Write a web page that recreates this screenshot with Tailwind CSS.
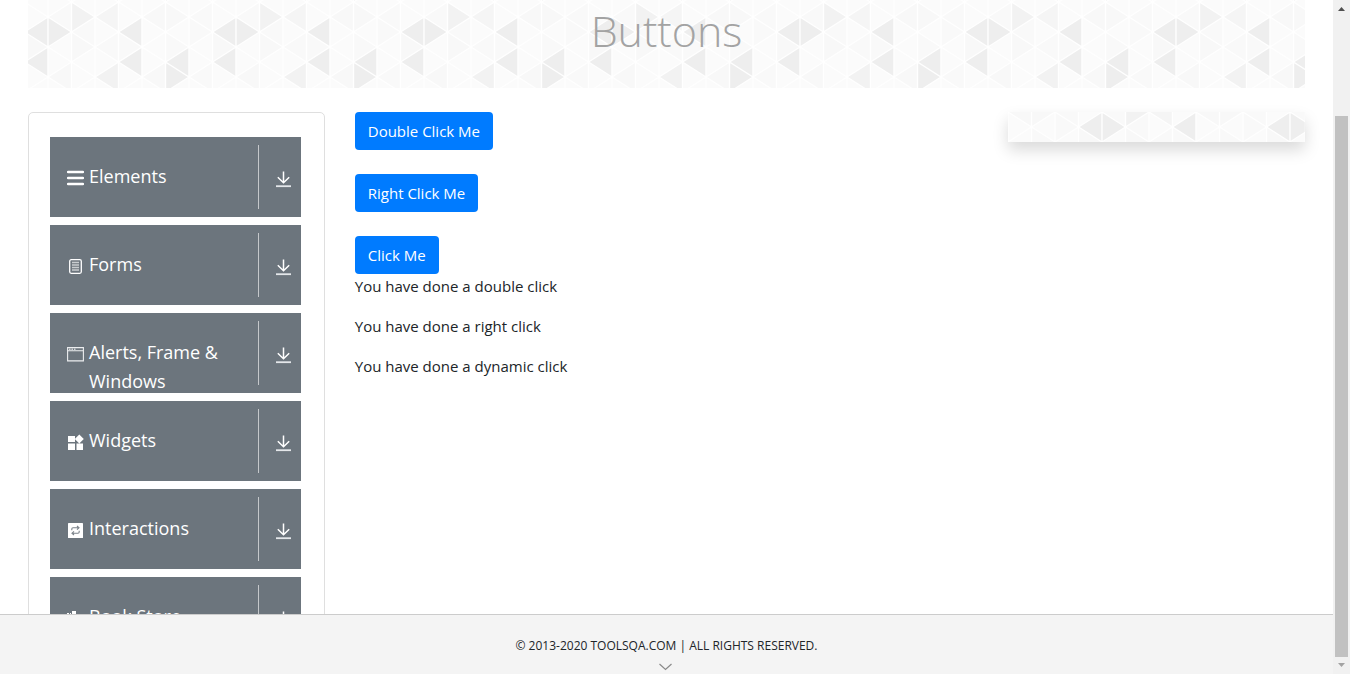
<!DOCTYPE html>
<html lang="en">
<head>
<meta charset="utf-8">
<title>Buttons</title>
<script src="https://cdn.jsdelivr.net/npm/@tailwindcss/browser@4"></script>
</head>
<body class="h-screen flex overflow-hidden bg-white font-['Open_Sans',sans-serif] text-[15px] leading-6 text-[#212529]">

<!-- Shared symbols -->
<svg class="hidden">
  <symbol id="down" viewBox="0 0 15 17"><path d="M7.500 0.500v11M1.800 6.200l5.700 5.500 5.700-5.500" fill="none" stroke="#fff" stroke-width="1.5"/><path d="M0 15.200h15" stroke="#e4e7ea" stroke-width="1.8"/></symbol>
</svg>

<div class="flex-1 min-w-0 flex flex-col">
  <main class="flex-1 min-h-0 overflow-hidden px-7">
    <header class="relative h-[88px]">
      <svg class="absolute inset-0 w-full h-full" aria-hidden="true">
        <defs>
          <g id="tile">
            <rect width="188" height="90" fill="#fbfbfb"/>
            <g fill="#eeeeee">
              <path d="M188 15v30L164.500 30zM0 15v30L23.500 30zM188 45v30L164.500 60zM94 15v30L70.500 30zM94 45v30L70.500 60zM141 45v30L117.500 60zM117.500 60v30L141 75z"/>
            </g>
            <path fill="#f2f2f2" d="M70.500 60v30L47 75zM23.500 0v30L47 15z"/>
            <path fill="#f5f5f5" d="M70.500 0v30L47 15z"/>
            <path fill="#f8f8f8" d="M23.500 30v30L47 45zM164.500 30v30L188 45zM117.500 60v30L94 75zM23.500 60v30L0 75zM117.500 0v30L94 15zM117.500 0v30L141 15z"/>
            <path fill="#f9f9f9" d="M23.500 0v30L0 15zM70.500 30v30L94 45zM164.500 60v30L141 75zM141 15v30L164.500 30zM70.500 30v30L47 45zM47 15v30L23.500 30zM117.500 30v30L141 45zM164.500 0v30L141 15z"/>
            <path stroke="#fff" stroke-width="1.4" fill="none" d="M0 0v90M23.500 0v90M47 0v90M70.500 0v90M94 0v90M117.500 0v90M141 0v90M164.500 0v90M188 0v90M0 15L117.500 90M0 45L70.500 90M0 75L23.500 90M23.500 0L164.500 90M70.500 0L188 75M117.500 0L188 45M164.500 0L188 15M0 15L23.500 0M0 45L70.500 0M0 75L117.500 0M23.500 90L164.500 0M70.500 90L188 15M117.500 90L188 45M164.500 90L188 75"/>
          </g>
          <pattern id="mosaic" x="20" y="2" width="188" height="90" patternUnits="userSpaceOnUse"><use href="#tile"/></pattern>
          <pattern id="mosaicSide" x="94" y="-15" width="188" height="90" patternUnits="userSpaceOnUse"><use href="#tile"/></pattern>
        </defs>
        <rect width="100%" height="100%" fill="url(#mosaic)"/>
      </svg>
      <h1 class="relative text-center font-light text-[43px] leading-[62px] text-[#a3a3a3]">Buttons</h1>
    </header>

    <div class="mt-6 grid grid-cols-4 gap-[30px] items-start">
      <nav class="rounded-[5px] border border-[#dfdfdf] pt-6 pb-6 pl-[21px] pr-[23px] flex flex-col gap-2 text-[18px] leading-[29px] text-white">
        <button class="h-20 flex overflow-hidden bg-[#6c757d] text-left">
          <svg class="ml-[17px] mt-[33px] w-[17px] h-4 shrink-0" viewBox="0 0 17 16"><path d="M1 2h15M1 8h15M1 14h15" stroke="#fff" stroke-width="2.5" stroke-linecap="round"/></svg>
          <span class="ml-[5px] mt-[25px] flex-1">Elements</span>
          <span class="my-2 w-[43px] h-16 shrink-0 border-l border-[#c5c8cb] flex items-center justify-center pl-[7px] pt-1"><svg class="w-[15px] h-[17px]"><use href="#down"/></svg></span>
        </button>
        <button class="h-20 flex overflow-hidden bg-[#6c757d] text-left">
          <svg class="ml-[17px] mt-[33px] w-[17px] h-4 shrink-0" viewBox="0 0 17 16"><rect x="2.700" y="1.700" width="11.600" height="13.600" rx="1.500" fill="none" stroke="#fff" stroke-width="1.300"/><path d="M5 4.500h7M5 7h7M5 9.500h7M5 12h7" stroke="#c9cdd0" stroke-width="1.300"/></svg>
          <span class="ml-[5px] mt-[25px] flex-1">Forms</span>
          <span class="my-2 w-[43px] h-16 shrink-0 border-l border-[#c5c8cb] flex items-center justify-center pl-[7px] pt-1"><svg class="w-[15px] h-[17px]"><use href="#down"/></svg></span>
        </button>
        <button class="h-20 flex overflow-hidden bg-[#6c757d] text-left">
          <svg class="ml-[17px] mt-[33px] w-[17px] h-4 shrink-0" viewBox="0 0 17 16"><path d="M.600 1.600h15.800v13.300H.600zM.600 4.700h15.800" fill="none" stroke="#eceef0" stroke-width="1.100"/><path d="M2 3.200h1.500M4.500 3.200H6M7 3.200h1.500" stroke="#fff"/></svg>
          <span class="ml-[5px] mt-[25px] flex-1">Alerts, Frame &amp; Windows</span>
          <span class="my-2 w-[43px] h-16 shrink-0 border-l border-[#c5c8cb] flex items-center justify-center pl-[7px] pt-1"><svg class="w-[15px] h-[17px]"><use href="#down"/></svg></span>
        </button>
        <button class="h-20 flex overflow-hidden bg-[#6c757d] text-left">
          <svg class="ml-[17px] mt-[33px] w-[17px] h-4 shrink-0" viewBox="0 0 17 16"><path fill="#fff" d="M1 2h7v6H1zM1 9.500h7V16H1zM9.500 9.500H16V16H9.500zM12.300.500L16.800 5l-4.500 4.500L7.800 5z"/></svg>
          <span class="ml-[5px] mt-[25px] flex-1">Widgets</span>
          <span class="my-2 w-[43px] h-16 shrink-0 border-l border-[#c5c8cb] flex items-center justify-center pl-[7px] pt-1"><svg class="w-[15px] h-[17px]"><use href="#down"/></svg></span>
        </button>
        <button class="h-20 flex overflow-hidden bg-[#6c757d] text-left">
          <svg class="ml-[17px] mt-[33px] w-[17px] h-4 shrink-0" viewBox="0 0 17 16"><rect x="1" y="1" width="15" height="15" rx=".6" fill="#fff"/><path d="M4.800 8.200V7q0-1.200 1.200-1.200h5M12.200 8.800V10q0 1.200-1.200 1.200H6M10 4l2 1.800-2 1.800M7 9.400l-2 1.800L7 13" fill="none" stroke="#7b838a" stroke-width="1.100"/></svg>
          <span class="ml-[5px] mt-[25px] flex-1">Interactions</span>
          <span class="my-2 w-[43px] h-16 shrink-0 border-l border-[#c5c8cb] flex items-center justify-center pl-[7px] pt-1"><svg class="w-[15px] h-[17px]"><use href="#down"/></svg></span>
        </button>
        <button class="h-20 flex overflow-hidden bg-[#6c757d] text-left">
          <svg class="ml-[17px] mt-[33px] w-[17px] h-4 shrink-0" viewBox="0 0 17 16"><path fill="#fff" d="M0 3h2v12H0zM5 1h4v14H5zM3 3h1v12H3zM11 5h3v10h-3z"/></svg>
          <span class="ml-[5px] mt-[25px] flex-1">Book Store</span>
          <span class="my-2 w-[43px] h-16 shrink-0 border-l border-[#c5c8cb] flex items-center justify-center pl-[7px] pt-1"><svg class="w-[15px] h-[17px]"><use href="#down"/></svg></span>
        </button>
      </nav>

      <section class="col-span-2">
        <div class="flex flex-col items-start gap-6 text-white">
          <button class="h-[38px] px-[13px] rounded bg-[#007bff]">Double Click Me</button>
          <button class="h-[38px] px-[13px] rounded bg-[#007bff]">Right Click Me</button>
          <button class="h-[38px] px-[13px] rounded bg-[#007bff]">Click Me</button>
        </div>
        <div class="flex flex-col gap-4">
          <p>You have done a double click</p>
          <p>You have done a right click</p>
          <p>You have done a dynamic click</p>
        </div>
      </section>

      <aside class="h-[30px] shadow-[0_8px_16px_rgba(0,0,0,0.15)]">
        <svg class="w-full h-full" aria-hidden="true"><rect width="100%" height="100%" fill="url(#mosaicSide)"/></svg>
      </aside>
    </div>
  </main>

  <footer class="h-[60px] shrink-0 border-t border-[#ccc] bg-[#f4f4f4] flex flex-col items-center pt-[21px] text-[12px] leading-5">
    <span>© 2013-2020 TOOLSQA.COM | ALL RIGHTS RESERVED.</span>
    <svg class="mt-[7px] mr-[3px] w-[13px] h-2" viewBox="0 0 13 8"><path d="M.500 1l6 5.500 6-5.500" fill="none" stroke="#8a8a8a" stroke-width="1.200"/></svg>
  </footer>
</div>

<!-- Scroll track -->
<div class="w-[17px] shrink-0 bg-[#f1f1f1] flex flex-col items-center" aria-hidden="true">
  <svg class="mt-[7px] w-[7px] h-1 shrink-0" viewBox="0 0 7 4"><path d="M0 4L3.500 0 7 4z" fill="#505050"/></svg>
  <div class="mt-[105px] mb-[6px] w-[13px] flex-1 bg-[#c1c1c1]"></div>
  <svg class="mb-[7px] w-[7px] h-1 shrink-0" viewBox="0 0 7 4"><path d="M0 0L3.500 4 7 0z" fill="#a3a3a3"/></svg>
</div>
</body>
</html>
